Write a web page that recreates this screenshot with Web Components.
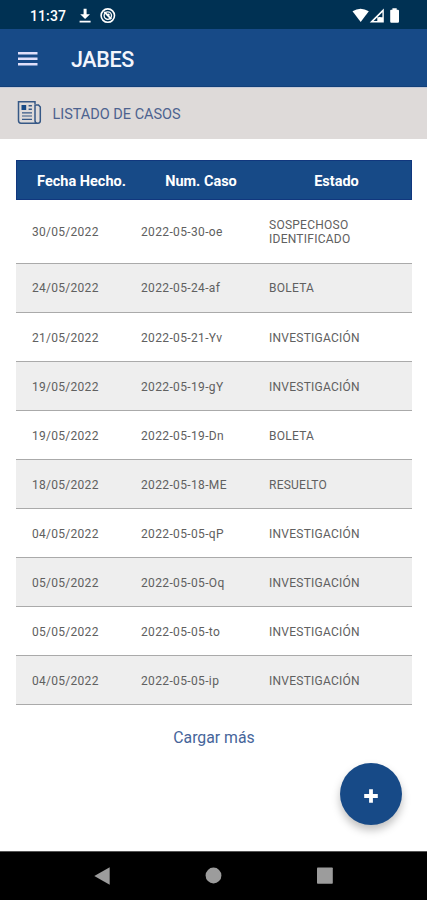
<!DOCTYPE html>
<html lang="es"><head><meta charset="utf-8"><title>JABES</title>
<style>html,body{margin:0;height:100%;background:#fff}body{overflow:hidden;font-family:Roboto,"Noto Sans",sans-serif}</style></head><body>
<jabes-app></jabes-app>
<script>
const define=(name,html,init)=>customElements.define(name,class extends HTMLElement{
  constructor(){super();const t=document.createElement('template');t.innerHTML=html;
    this.attachShadow({mode:'open'}).append(t.content.cloneNode(true));}
  connectedCallback(){if(init)init(this,this.shadowRoot);}
});

define('status-bar',`<style>
:host{display:flex;height:29px;box-sizing:border-box;background:#003153;color:#fff;align-items:center;padding:3px 0 0 30px}
span{font-size:14px;font-weight:500;line-height:16px;width:49px;letter-spacing:.1px;white-space:nowrap}
svg{display:block}.r{margin-left:auto;margin-right:26px}
</style><span>11:37</span>
<svg width="38" height="18" viewBox="79 7 38 18" fill="#fff"><path d="M83.6 8.8h3v5.4h3.4l-4.9 4.9-4.9-4.9h3.4zM79.6 20.7h11v1.9h-11z"/><g fill="none" stroke="#fff"><circle cx="107.8" cy="15.6" r="6.7" stroke-width="1.6"/><circle cx="107.8" cy="15.6" r="3.7" stroke-width="1.3"/><path d="M104.3 11.8l7 7.3" stroke-width="1.8"/></g><circle cx="108.4" cy="14.8" r="1.3"/></svg>
<svg class="r" width="49" height="18" viewBox="352 7 49 18" fill="#fff"><path d="M352.5 11.2Q360.500 6.200 368.800 11.200L360.700 21.900Z"/><path fill-rule="evenodd" d="M383.800 8.500V22.600H369.700ZM382.400 12.300L373.600 21.100H377.300V17.300H382.400Z"/><path d="M379 17h1.500v3.500H379z"/><path d="M390.200 10.600q0-.9 1-.9h1.200V8.200h4.300v1.500h1.200q1.100 0 1.100 1v10.800q0 1.200-1.200 1.200h-6.500q-1.100 0-1.100-1.200z"/></svg>`);

define('app-bar',`<style>
:host{display:flex;height:58px;box-sizing:border-box;background:#174a87;color:#fff;align-items:center;padding:3px 0 0 18px;border-bottom:1px solid #124079}
h1{margin:1px 0 0 33px;font-size:21.5px;line-height:26px;font-weight:500;letter-spacing:-.35px;color:#f3f5fc}
</style><svg width="20" height="16" viewBox="0 0 20 16" fill="#e0dffa"><path d="M0 1h19.500v2.600H0zM0 6.500h19.500v2.600H0zM0 12h19.500v2.600H0z"/></svg><h1><slot></slot></h1>`);

define('section-heading',`<style>
:host{display:flex;height:52px;background:#dedad9;color:#4d628f;align-items:center;padding-left:17px;box-sizing:border-box;box-shadow:inset 0 1px #c5cad8}
h2{margin:3px 0 0 10.500px;font-size:14.500px;line-height:18px;font-weight:400;letter-spacing:-.02px}
svg{margin-top:-2px}
</style><svg width="25" height="25" viewBox="0 0 25 25" fill="none" stroke="#365886" stroke-width="1.500"><path d="M18 4V1.800H1.500V20.500Q1.500 23.200 4 23.200H21Q23.300 23.200 23.300 20.800V7L21.500 5H18V20.500Q18 23 20.500 23.200"/><path d="M5 12.800h10M5 16h10M5 19.300h10" stroke-width="1.200"/><path d="M11.600 5.800h3.300M11.600 9.300h3.300" stroke-width="1.600"/><path d="M4.500 5h4.700v5H4.500z" fill="#174a87" stroke="none"/></svg><h2><slot></slot></h2>`);

define('case-row',`<style>
:host{display:grid;grid-template-columns:109px 128px 1fr;height:49.05px;box-sizing:border-box;align-items:center;padding:2px 0 0 16px;border-bottom:1px solid #aaa;font-size:12px;line-height:14.500px;color:#606060;letter-spacing:.28px}
:host([alt]){background:#eee}:host([tall]){height:63.700px}
.n{letter-spacing:.36px}.s{max-width:96px;letter-spacing:.25px}
</style><span class="d"></span><span class="n"></span><span class="s"></span>`,(el,r)=>{
  r.querySelector('.d').textContent=el.getAttribute('date');
  r.querySelector('.n').textContent=el.getAttribute('number');
  r.querySelector('.s').textContent=el.getAttribute('status');
});

define('case-table',`<style>
:host{display:block;margin:21px 15px 0 16px}
header{display:grid;grid-template-columns:129px 110px 161px;height:40px;box-sizing:border-box;background:#174a87;color:#fff;align-items:center;text-align:center;font-size:14.500px;font-weight:700;border:1px solid #11377e;padding-top:2px;overflow:hidden}
</style><header><span>Fecha Hecho.</span><span>Num. Caso</span><span>Estado</span></header><main></main>`,(el,r)=>{
  [['30/05/2022','30-oe','SOSPECHOSO IDENTIFICADO'],['24/05/2022','24-af','BOLETA'],['21/05/2022','21-Yv','INVESTIGACIÓN'],['19/05/2022','19-gY','INVESTIGACIÓN'],['19/05/2022','19-Dn','BOLETA'],['18/05/2022','18-ME','RESUELTO'],['04/05/2022','05-qP','INVESTIGACIÓN'],['05/05/2022','05-Oq','INVESTIGACIÓN'],['05/05/2022','05-to','INVESTIGACIÓN'],['04/05/2022','05-ip','INVESTIGACIÓN']].forEach((c,i)=>{
    const row=document.createElement('case-row');
    row.setAttribute('date',c[0]);row.setAttribute('number','2022-05-'+c[1]);row.setAttribute('status',c[2]);
    row.toggleAttribute('alt',i%2===1);row.toggleAttribute('tall',i===0);
    r.querySelector('main').append(row);
  });
});

define('load-more',`<style>:host{display:block;margin-top:22.600px;padding-left:1px;text-align:center;color:#46659a;font-size:15.800px;line-height:20px}</style><slot></slot>`);

define('add-button',`<style>
:host{position:absolute;right:25px;bottom:26px;width:62px;height:62px;border-radius:50%;background:#174a87;display:grid;place-items:center;box-shadow:0 5px 9px rgba(0,0,0,.25)}
</style><svg width="14" height="14" viewBox="0 0 14 14" style="margin-top:3px"><path d="M7 .2v13.600M.2 7h13.600" stroke="#fff" stroke-width="3.800"/></svg>`);

define('nav-bar',`<style>
:host{display:flex;height:49px;box-sizing:border-box;background:#000;border-top:1px solid #555;justify-content:space-between;align-items:center;padding:0 94px}
svg{display:block;margin-top:-1px}
</style><svg width="16" height="18" fill="#9c9c9c"><path d="M.3 9L15.700.2V17.800z"/></svg><svg width="17" height="17" fill="#9c9c9c"><circle cx="8.500" cy="8.500" r="7.900"/></svg><svg width="16" height="17" fill="#9c9c9c"><rect y=".4" width="15.800" height="16.400" rx=".8"/></svg>`);

define('jabes-app',`<style>
:host{display:flex;flex-direction:column;height:900px;width:427px;background:#fff}
.content{flex:1;min-height:0;position:relative}
</style><status-bar></status-bar><app-bar>JABES</app-bar><section-heading>LISTADO DE CASOS</section-heading>
<div class="content"><case-table></case-table><load-more>Cargar más</load-more><add-button></add-button></div><nav-bar></nav-bar>`);
</script></body></html>
